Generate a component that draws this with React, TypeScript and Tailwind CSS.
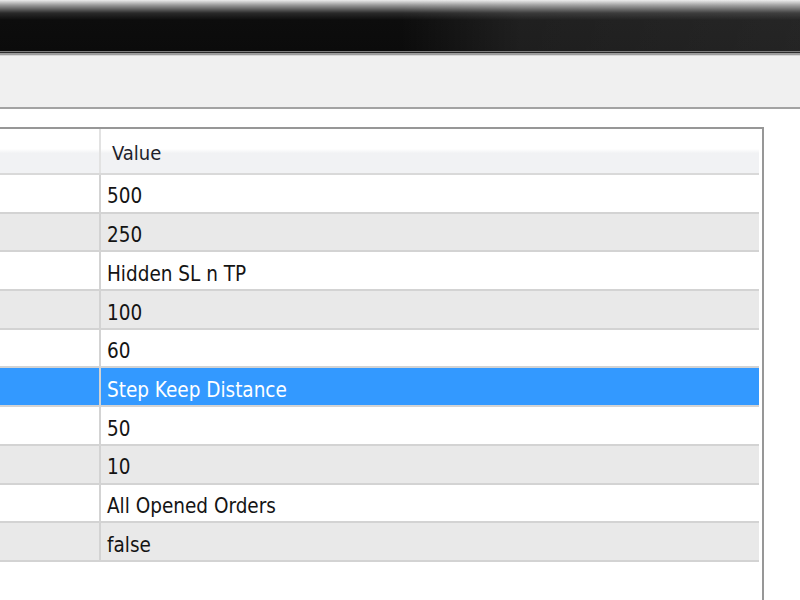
const rows = [
  { value: "500" },
  { value: "250" },
  { value: "Hidden SL n TP" },
  { value: "100" },
  { value: "60" },
  { value: "Step Keep Distance", selected: true },
  { value: "50" },
  { value: "10" },
  { value: "All Opened Orders" },
  { value: "false" },
];

const font = { fontFamily: '"DejaVu Sans Condensed", "DejaVu Sans", Tahoma, sans-serif' };

const App = () => {
  return (
    <div className="w-[800px] h-[600px] overflow-hidden bg-white" style={font}>
      {/* window title bar */}
      <div className="relative h-[51px] bg-[linear-gradient(to_bottom,#ececec_0px,#9a9a9a_5px,#2a2a2a_13px,#0d0d0d_20px,#0b0b0b_100%)]">
        <div className="absolute inset-0 bg-[linear-gradient(to_right,transparent_0%,transparent_50%,rgba(255,255,255,0.08)_65%,rgba(255,255,255,0.1)_100%)]" />
      </div>
      <div className="h-px bg-[#7c7c7c]" />
      <div className="h-px bg-[#2c2c2c]" />
      <div className="h-[2px] bg-[#9c9c9c]" />
      <div className="h-px bg-[#d6d6d6]" />

      {/* toolbar strip */}
      <div className="h-[53px] bg-[#f0f0f0] border-b-2 border-[#a3a3a3]" />

      <div className="pt-[18px]">
        <div className="w-[764px] border-t-2 border-r-2 border-[#979797] pr-[3px]">
          {/* header */}
          <div className="flex h-[46px] border-b-2 border-[#d9d9d9] bg-[linear-gradient(to_bottom,#ffffff_0%,#ffffff_45%,#f1f2f4_55%,#f1f2f4_100%)]">
            <div className="w-[101px] border-r-2 border-[#e2e2e2]" />
            <div className="flex items-center pl-[11px] pt-[4px] text-[20px] text-[#1e1e2a]">Value</div>
          </div>

          {rows.map((row, i) => {
            const bg = row.selected
              ? "bg-[#3399ff]"
              : i % 2 === 0
                ? "bg-white"
                : "bg-[#e9e9e9]";
            return (
              <div
                key={i}
                className={`flex h-[38.7px] border-b-2 border-[#d3d3d3] ${bg}`}
              >
                <div className="w-[101px] border-r-2 border-[#d3d3d3]" />
                <div
                  className={`flex items-center pl-[6px] pt-[7px] text-[20.5px] ${
                    row.selected ? "text-white" : "text-[#141414]"
                  }`}
                >
                  {row.value}
                </div>
              </div>
            );
          })}
          <div className="h-[60px]" />
        </div>
      </div>
    </div>
  );
};

export default App;
